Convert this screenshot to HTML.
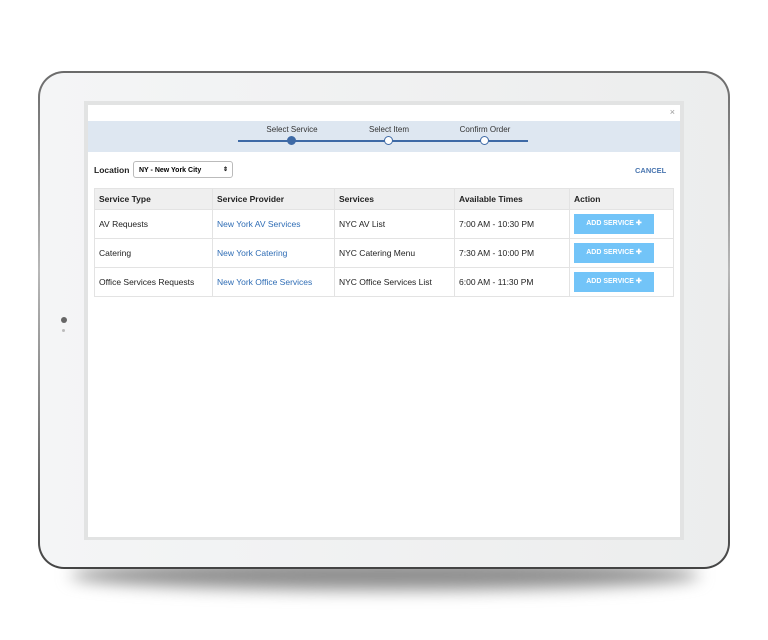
<!DOCTYPE html>
<html><head><style>
body{margin:0;width:768px;height:640px;background:#fff;position:relative;overflow:hidden;font-family:"Liberation Sans",Arial,sans-serif}
.shadow{position:absolute;left:70px;top:560px;width:630px;height:30px;border-radius:50%;background:#8f8f8f;filter:blur(8px)}
.frame{position:absolute;left:38px;top:71px;width:692px;height:498px;border-radius:26px;background:linear-gradient(#6a6a6a,#b8b8b8 40%,#444);}
.body{position:absolute;left:40px;top:73px;width:688px;height:494px;border-radius:24px;background:linear-gradient(90deg,#f4f5f6,#eceded)}
.screen{position:absolute;left:84px;top:101px;width:600px;height:439px;background:#e2e3e3}
.page{position:absolute;left:88px;top:105px;width:592px;height:432px;background:#fff}
.band{position:absolute;left:0;top:16px;width:592px;height:31px;background:#dee7f1}
.lbl{position:absolute;top:20px;font-size:8px;color:#333;transform:translateX(-50%);white-space:nowrap}
.line{position:absolute;left:150px;top:35px;width:290px;height:1.5px;background:#3e6aa6}
.dot{position:absolute;top:31px;width:7px;height:7px;border-radius:50%;border:1.5px solid #3e6aa6;background:#fff}
table{position:absolute;left:6px;top:83px;width:580px;border-collapse:collapse;font-size:8.5px;color:#222;table-layout:fixed}
td,th{border:1px solid #e3e3e3;text-align:left;padding:0 4px;height:28px;white-space:nowrap}
th{background:#efefef;height:20px;font-weight:bold}
a{color:#2f6db5;text-decoration:none}
.btn{display:block;width:80px;height:20px;line-height:20px;background:#72c4f8;color:#fff;font-size:7px;font-weight:bold;text-align:center}
</style></head><body>
<div class="shadow"></div>
<div class="frame"></div><div class="body"></div>
<div style="position:absolute;left:61px;top:317px;width:6px;height:6px;border-radius:50%;background:#666"></div>
<div style="position:absolute;left:62px;top:329px;width:3px;height:3px;border-radius:50%;background:#bbb"></div>
<div class="screen"></div>
<div class="page">
<div style="position:absolute;right:5px;top:2px;font-size:9px;color:#999">×</div>
<div class="band"></div>
<div class="lbl" style="left:204px">Select Service</div>
<div class="lbl" style="left:301px">Select Item</div>
<div class="lbl" style="left:397px">Confirm Order</div>
<div class="line"></div>
<div class="dot" style="left:199px;background:#3e6aa6"></div>
<div class="dot" style="left:296px"></div>
<div class="dot" style="left:392px"></div>
<div style="position:absolute;left:6px;top:60px;font-size:8.5px;font-weight:bold;color:#222">Location</div>
<div style="position:absolute;left:45px;top:56px;height:17px;border:1px solid #bbb;border-radius:3px;font-size:7px;font-weight:bold;line-height:17px;padding-left:5px;box-sizing:border-box;width:100px">NY - New York City<span style="position:absolute;right:4px;font-size:6px">⇕</span></div>
<div style="position:absolute;left:547px;top:61px;font-size:7.5px;font-weight:bold;color:#4a76b0">CANCEL</div>
<table>
<colgroup><col style="width:118px"><col style="width:122px"><col style="width:120px"><col style="width:115px"><col></colgroup>
<tr><th>Service Type</th><th>Service Provider</th><th>Services</th><th>Available Times</th><th>Action</th></tr>
<tr><td>AV Requests</td><td><a>New York AV Services</a></td><td>NYC AV List</td><td>7:00 AM - 10:30 PM</td><td><span class="btn">ADD SERVICE ✚</span></td></tr>
<tr><td>Catering</td><td><a>New York Catering</a></td><td>NYC Catering Menu</td><td>7:30 AM - 10:00 PM</td><td><span class="btn">ADD SERVICE ✚</span></td></tr>
<tr><td>Office Services Requests</td><td><a>New York Office Services</a></td><td>NYC Office Services List</td><td>6:00 AM - 11:30 PM</td><td><span class="btn">ADD SERVICE ✚</span></td></tr>
</table>
</div>
</body></html>
